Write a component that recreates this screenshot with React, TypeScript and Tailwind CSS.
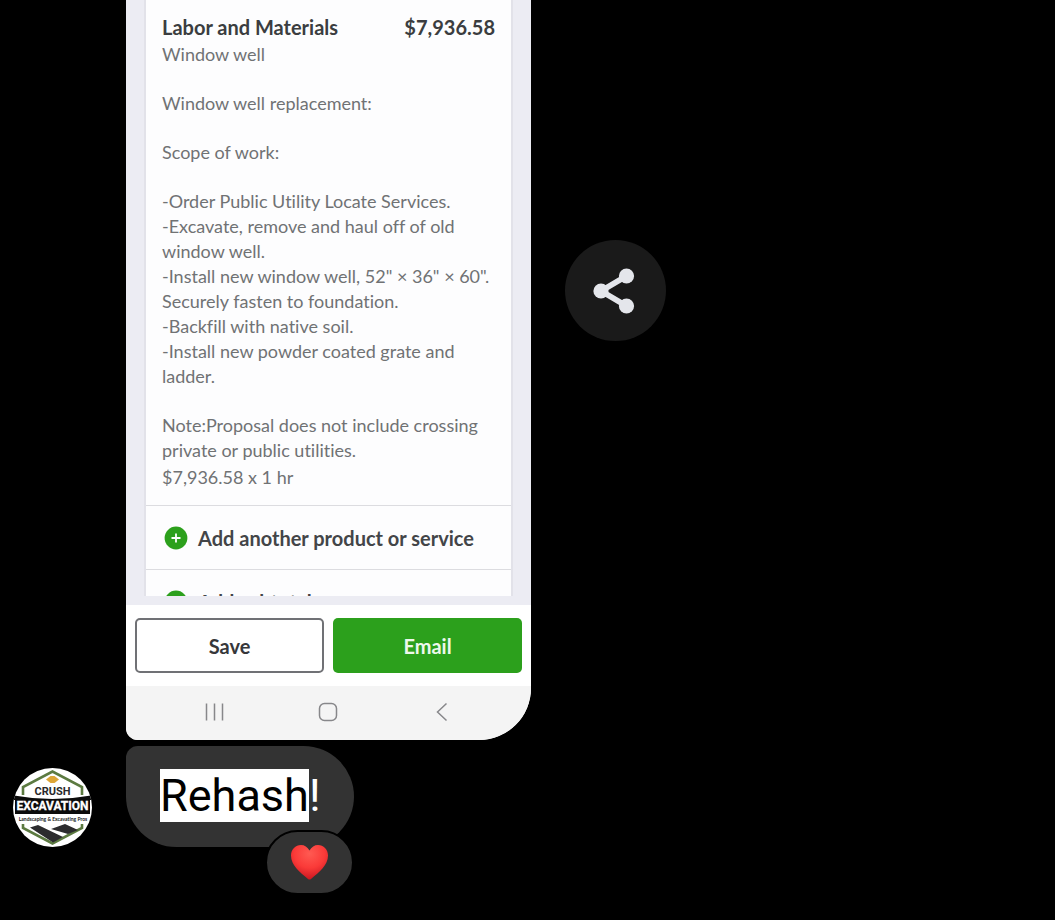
import { useId } from "react";

type ActionRowProps = { label: string };

const SCOPE_LINES = [
  "-Order Public Utility Locate Services.",
  "-Excavate, remove and haul off of old window well.",
  '-Install new window well, 52" × 36" × 60". Securely fasten to foundation.',
  "-Backfill with native soil.",
  "-Install new powder coated grate and ladder.",
];

function ActionRow({ label }: ActionRowProps) {
  return (
    <button
      type="button"
      className="flex h-16 w-full shrink-0 items-center gap-2.5 border-t border-[#dcdce0] pl-[18px] text-left text-xl font-bold whitespace-nowrap text-[#434548]"
    >
      <svg viewBox="0 0 24 24" className="size-6 shrink-0" aria-hidden="true">
        <circle cx="12" cy="12" r="11.4" fill="#2ca01c" />
        <path d="M12 7.5v9M7.5 12h9" stroke="#fff" strokeWidth="1.8" />
      </svg>
      {label}
    </button>
  );
}

function EstimateCard() {
  return (
    <div className="flex h-[605px] flex-col bg-[#ececf3] px-[18px] pb-[9px]">
      <div className="flex min-h-0 flex-1 flex-col overflow-hidden border-x-2 border-[#e2e2e9] bg-[#fdfdfe]">
        <div className="flex flex-col px-4 pt-[13px] pb-[15px] text-lg leading-[25px] text-[#707274]">
          <div className="flex justify-between pb-px text-xl leading-7 font-bold text-[#3b3d40]">
            <h1>Labor and Materials</h1>
            <span>$7,936.58</span>
          </div>
          <div className="flex flex-col gap-6">
            <p>Window well</p>
            <p>Window well replacement:</p>
            <p>Scope of work:</p>
            <div>
              {SCOPE_LINES.map((line) => (
                <p key={line}>{line}</p>
              ))}
            </div>
            <p>Note:Proposal does not include crossing private or public utilities.</p>
          </div>
          <p className="pt-0.5">$7,936.58 x 1 hr</p>
        </div>
        <ActionRow label="Add another product or service" />
        <ActionRow label="Add subtotal" />
      </div>
    </div>
  );
}

function PhoneNav() {
  const button = "flex h-8 w-8 items-center justify-center";
  return (
    <nav className="flex h-[54px] items-center justify-between bg-[#f4f4f4] pr-[73px] pb-0.5 pl-[72px] text-[#87878a]">
      <button type="button" aria-label="Recent apps" className={button}>
        <svg viewBox="0 0 20 20" className="size-5" fill="none" stroke="currentColor" strokeWidth="1.5">
          <path d="M2.5 1.5v17M10.5 1.5v17M18.5 1.5v17" />
        </svg>
      </button>
      <button type="button" aria-label="Home" className={button}>
        <svg viewBox="0 0 20 20" className="size-5" fill="none" stroke="currentColor" strokeWidth="1.5">
          <rect x="1.5" y="1.5" width="17" height="17" rx="5" />
        </svg>
      </button>
      <button type="button" aria-label="Back" className={button}>
        <svg viewBox="0 0 20 20" className="size-5" fill="none" stroke="currentColor" strokeWidth="1.5">
          <path d="M14.5 1.5 5.5 10l9 8.5" />
        </svg>
      </button>
    </nav>
  );
}

function ShareIcon() {
  return (
    <svg viewBox="0 0 44 46" className="h-[46px] w-11 overflow-visible" aria-hidden="true">
      <path d="M32.5 8 7 23l25.500 15" fill="none" stroke="#e4e6eb" strokeWidth="5.6" />
      <g fill="#e4e6eb">
        <circle cx="32.5" cy="8" r="7.6" />
        <circle cx="7" cy="23" r="7.6" />
        <circle cx="32.5" cy="38" r="7.6" />
      </g>
    </svg>
  );
}

function CompanyAvatar() {
  const clip = useId();
  return (
    <svg viewBox="0 0 80 80" className="size-20 shrink-0" role="img" aria-label="Crush Excavation">
      <clipPath id={clip}>
        <circle cx="40.5" cy="40.5" r="39.5" />
      </clipPath>
      <g clipPath={`url(#${clip})`}>
        <rect width="80" height="80" fill="#fff" />
        <path d="M11 28v-8L40.500 4.500 70 20v8" fill="none" stroke="#5c7a41" strokeWidth="2.6" />
        <path d="M11 57v4l29.500 15.500L70 61v-4" fill="none" stroke="#5c7a41" strokeWidth="2.6" />
        <path d="m34 12.500 4.500-3.500h4l4.500 3.500-4.500 3.500h-4Z" fill="#dda637" />
        <path d="M2 28.500q38.500 7 77 0V47H2Z" fill="#0b0b0b" />
        <path d="m18 60.500 8-2.500 25 12-10 5.500ZM39 62l14-5 13 6-10 4Z" fill="#2c2c2e" />
        <path d="M2.500 33v14M78.500 33v14" stroke="#fff" strokeWidth="1" />
        <g textAnchor="middle" fontWeight="700">
          <text x="40.5" y="28" fontSize="11" fill="#29292b" className="font-['Roboto',sans-serif]">
            CRUSH
          </text>
          <text x="40.5" y="43" fontSize="12" fill="#fff" stroke="#fff" strokeWidth="0.3" className="font-['Roboto',sans-serif]">
            EXCAVATION
          </text>
          <text x="41" y="54" fontSize="5" fill="#171717" className="font-['Lato',sans-serif]">
            Landscaping &amp; Excavating Pros
          </text>
        </g>
      </g>
    </svg>
  );
}

function Heart() {
  const fill = useId();
  return (
    <svg viewBox="0 0 40 38" className="h-[38px] w-10" role="img" aria-label="Heart">
      <defs>
        <radialGradient id={fill} cx="0.5" cy="0.25" r="0.75">
          <stop offset="0" stopColor="#ff5a52" />
          <stop offset="0.55" stopColor="#fa3a38" />
          <stop offset="1" stopColor="#cb1620" />
        </radialGradient>
      </defs>
      <path
        d="M19.500 6.500C17.500 3 14.500 1 11 1 5.500 1 1 5.500 1 11.500c0 9.500 8.500 16.500 17 23.500.9.800 2.100.8 3 0 8.500-7 17-14 17-23.500C38 5.500 33.500 1 28 1c-3.500 0-6.500 2-8.500 5.500Z"
        fill={`url(#${fill})`}
      />
    </svg>
  );
}

export default function App() {
  return (
    <main className="flex min-h-screen flex-col gap-1.5 bg-black font-['Lato',sans-serif] [font-variant-ligatures:none]">
      <div className="flex gap-[34px] pl-[126px]">
        <section className="w-[405px] overflow-hidden rounded-br-[52px] rounded-bl-xl bg-white">
          <EstimateCard />
          <div className="grid grid-cols-2 gap-[9px] px-[9px] py-[13px] text-xl font-bold">
            <button type="button" className="h-[55px] rounded-[5px] border-2 border-[#707175] text-[#36373a]">
              Save
            </button>
            <button type="button" className="h-[55px] rounded-[5px] bg-[#2ca01c] text-[#edf8ec]">
              Email
            </button>
          </div>
          <PhoneNav />
        </section>
        <button
          type="button"
          aria-label="Share"
          className="mt-60 flex size-[101px] shrink-0 items-center justify-center rounded-full bg-[#1a1a1a]"
        >
          <ShareIcon />
        </button>
      </div>
      <div className="flex items-end gap-[34px] pl-3">
        <CompanyAvatar />
        <div className="relative rounded-[51px] rounded-tl-xl bg-[#333333] px-[34px] pt-[23px] pb-[25px] font-['Roboto',sans-serif] text-[45px] leading-[53px] text-white">
          <p>
            <mark className="inline-block bg-white text-black">Rehash</mark>!
          </p>
          <button
            type="button"
            aria-label="Loved, 1 reaction"
            className="absolute right-0 -bottom-12 flex h-[65px] w-[89px] items-center justify-center rounded-full border-2 border-black bg-[#333333]"
          >
            <Heart />
          </button>
        </div>
      </div>
    </main>
  );
}
